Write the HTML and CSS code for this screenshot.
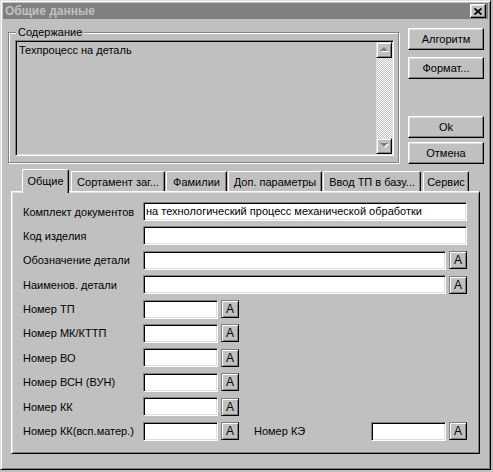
FILE: index.html
```html
<!DOCTYPE html>
<html lang="ru">
<head>
<meta charset="utf-8">
<title>Общие данные</title>
<link rel="stylesheet" href="styles.css">
</head>
<body>
<div class="window">
  <div class="titlebar">
    <span class="title">Общие данные</span>
    <span class="close"><svg width="8" height="7" viewBox="0 0 8 7"><path d="M0.5 0.5 L7.5 6.5 M7.5 0.5 L0.5 6.5" stroke="#000" stroke-width="1.7" fill="none"/></svg></span>
  </div>
  <div class="client">
    <div class="top">
      <div class="group">
        <div class="legend">Содержание</div>
        <div class="memo">
          <div class="memo-text">Техпроцесс на деталь</div>
          <div class="vscroll">
            <div class="sb-btn"><svg width="9" height="6" viewBox="0 0 9 6"><polygon points="5,1 9,5 1,5" fill="#fff"/><polygon points="4,0 8,4 0,4" fill="#808080"/></svg></div>
            <div class="sb-track"></div>
            <div class="sb-btn"><svg width="9" height="6" viewBox="0 0 9 6"><polygon points="1,1 9,1 5,5" fill="#fff"/><polygon points="0,0 8,0 4,4" fill="#808080"/></svg></div>
          </div>
        </div>
      </div>
      <div class="buttons">
        <div class="btn">Алгоритм</div>
        <div class="btn btn-next">Формат...</div>
        <div class="btn btn-ok">Ok</div>
        <div class="btn btn-cancel">Отмена</div>
      </div>
    </div>
    <div class="tabctl">
      <div class="tabs">
        <div class="tab tab-active t-obsh">Общие</div>
        <div class="tab t-sort">Сортамент заг...</div>
        <div class="tab t-fam">Фамилии</div>
        <div class="tab t-dop">Доп. параметры</div>
        <div class="tab t-vvod">Ввод ТП в базу...</div>
        <div class="tab t-serv">Сервис</div>
      </div>
      <div class="panel">
        <div class="row"><span class="lbl">Комплект документов</span><span class="field f-full">на технологический процесс механической обработки</span></div>
        <div class="row"><span class="lbl">Код изделия</span><span class="field f-full"></span></div>
        <div class="row"><span class="lbl">Обозначение детали</span><span class="field f-long"></span><span class="abtn">A</span></div>
        <div class="row"><span class="lbl">Наименов. детали</span><span class="field f-long"></span><span class="abtn">A</span></div>
        <div class="row"><span class="lbl">Номер ТП</span><span class="field f-short"></span><span class="abtn">A</span></div>
        <div class="row"><span class="lbl">Номер МК/КТТП</span><span class="field f-short"></span><span class="abtn">A</span></div>
        <div class="row"><span class="lbl">Номер ВО</span><span class="field f-short"></span><span class="abtn">A</span></div>
        <div class="row"><span class="lbl">Номер ВСН (ВУН)</span><span class="field f-short"></span><span class="abtn">A</span></div>
        <div class="row"><span class="lbl">Номер КК</span><span class="field f-short"></span><span class="abtn">A</span></div>
        <div class="row"><span class="lbl">Номер КК(всп.матер.)</span><span class="field f-short"></span><span class="abtn">A</span><span class="lbl lbl-ke">Номер КЭ</span><span class="field f-short"></span><span class="abtn">A</span></div>
      </div>
    </div>
  </div>
</div>
</body>
</html>
```
FILE: styles.css
```css
* { box-sizing: border-box; }

body {
  margin: 0;
  background: #c0c0c0;
  font-family: "Liberation Sans", Arial, sans-serif;
  font-size: 11px;
  color: #000;
}

.window {
  width: 491px;
  height: 470px;
  background: #c0c0c0;
  border: 1px solid;
  border-color: #dfdfdf #000 #000 #dfdfdf;
  box-shadow: inset 1px 1px #fff, inset -1px -1px #808080;
  padding: 2px;
  display: flex;
  flex-direction: column;
}

.titlebar {
  height: 16px;
  background: #808080;
  color: #c0c0c0;
  display: flex;
  align-items: center;
  justify-content: space-between;
  padding: 0 2px 0 2px;
}

.title {
  font-weight: bold;
  font-size: 12px;
  line-height: 14px;
}

.close {
  width: 16px;
  height: 14px;
  background: #c0c0c0;
  border: 1px solid;
  border-color: #fff #000 #000 #fff;
  box-shadow: inset -1px -1px #808080, inset 1px 1px #dfdfdf;
  display: flex;
  align-items: center;
  justify-content: center;
}

.client {
  padding-left: 5px;
}

.top {
  display: flex;
  align-items: flex-start;
  padding-top: 9px;
}

.group {
  width: 391px;
  margin-top: 4px;
  border: 1px solid #808080;
  box-shadow: inset 1px 1px #fff, 1px 1px #fff;
  padding: 0 4px 6px 6px;
}

.legend {
  width: max-content;
  height: 14px;
  line-height: 14px;
  margin: -8px 0 1px 1px;
  padding: 0 2px;
  background: #c0c0c0;
}

.memo {
  width: 379px;
  height: 116px;
  border: 1px solid;
  border-color: #808080 #fff #fff #808080;
  box-shadow: inset 1px 1px #000, inset -1px -1px #dfdfdf;
  padding: 1px;
  display: flex;
}

.memo-text {
  flex: 1;
  padding: 2px 2px;
  line-height: 13px;
}

.vscroll {
  width: 16px;
  display: flex;
  flex-direction: column;
}

.sb-btn {
  height: 16px;
  border: 1px solid;
  border-color: #dfdfdf #000 #000 #dfdfdf;
  box-shadow: inset 1px 1px #fff, inset -1px -1px #808080;
  background: #c0c0c0;
  display: flex;
  align-items: center;
  justify-content: center;
}

.sb-track {
  flex: 1;
  background: repeating-conic-gradient(#c0c0c0 0 25%, #fff 0 50%) 0 0 / 2px 2px;
}

.buttons {
  width: 76px;
  margin-left: 9px;
  display: flex;
  flex-direction: column;
}

.btn {
  height: 22px;
  border: 1px solid;
  border-color: #fff #000 #000 #fff;
  box-shadow: inset -1px -1px #808080, inset 1px 1px #dfdfdf;
  display: flex;
  align-items: center;
  justify-content: center;
}

.btn-next { margin-top: 7px; }
.btn-ok { margin-top: 37px; }
.btn-cancel { margin-top: 4px; }

.tabctl {
  margin: 5px 0 0 3px;
  width: 469px;
}

.tabs {
  height: 22px;
  display: flex;
  align-items: flex-end;
  padding-left: 11px;
  gap: 1px;
}

.tab {
  height: 20px;
  border-top: 1px solid #fff;
  border-left: 1px solid #fff;
  border-right: 1px solid #000;
  border-radius: 2px 2px 0 0;
  box-shadow: inset -1px 0 #808080;
  display: flex;
  align-items: center;
  justify-content: center;
  padding-top: 1px;
  white-space: nowrap;
}

.tab-active {
  height: 24px;
  margin-bottom: -2px;
  position: relative;
  z-index: 1;
  background: #c0c0c0;
  padding-bottom: 3px;
}

.t-obsh { width: 47px; }
.t-sort { width: 94px; margin-left: 1px; }
.t-fam { width: 61px; }
.t-dop { width: 94px; }
.t-vvod { width: 98px; }
.t-serv { width: 46px; margin-left: 1px; }

.panel {
  height: 263px;
  border: 1px solid;
  border-color: #fff #000 #000 #fff;
  box-shadow: inset 1px 1px #dfdfdf, inset -1px -1px #808080;
  padding: 10px 10px 0 11px;
  display: flex;
  flex-direction: column;
  gap: 5.4px;
}

.row {
  height: 19px;
  display: flex;
  align-items: center;
}

.lbl {
  width: 120px;
  white-space: nowrap;
}

.lbl-ke {
  width: 117px;
  margin-left: 15px;
}

.field {
  height: 19px;
  background: #fff;
  border: 1px solid;
  border-color: #808080 #fff #fff #808080;
  box-shadow: inset 1px 1px #000, inset -1px -1px #dfdfdf;
  padding: 0 2px;
  line-height: 17px;
  white-space: nowrap;
  overflow: hidden;
}

.f-full { width: 324px; }
.f-long { width: 303px; }
.f-short { width: 75px; }

.abtn {
  width: 18px;
  height: 18px;
  margin-left: 3px;
  border: 1px solid;
  border-color: #808080 #000 #000 #808080;
  box-shadow: inset 1px 1px #fff, inset -1px -1px #808080;
  display: flex;
  align-items: center;
  justify-content: center;
  font-size: 12px;
}
```
